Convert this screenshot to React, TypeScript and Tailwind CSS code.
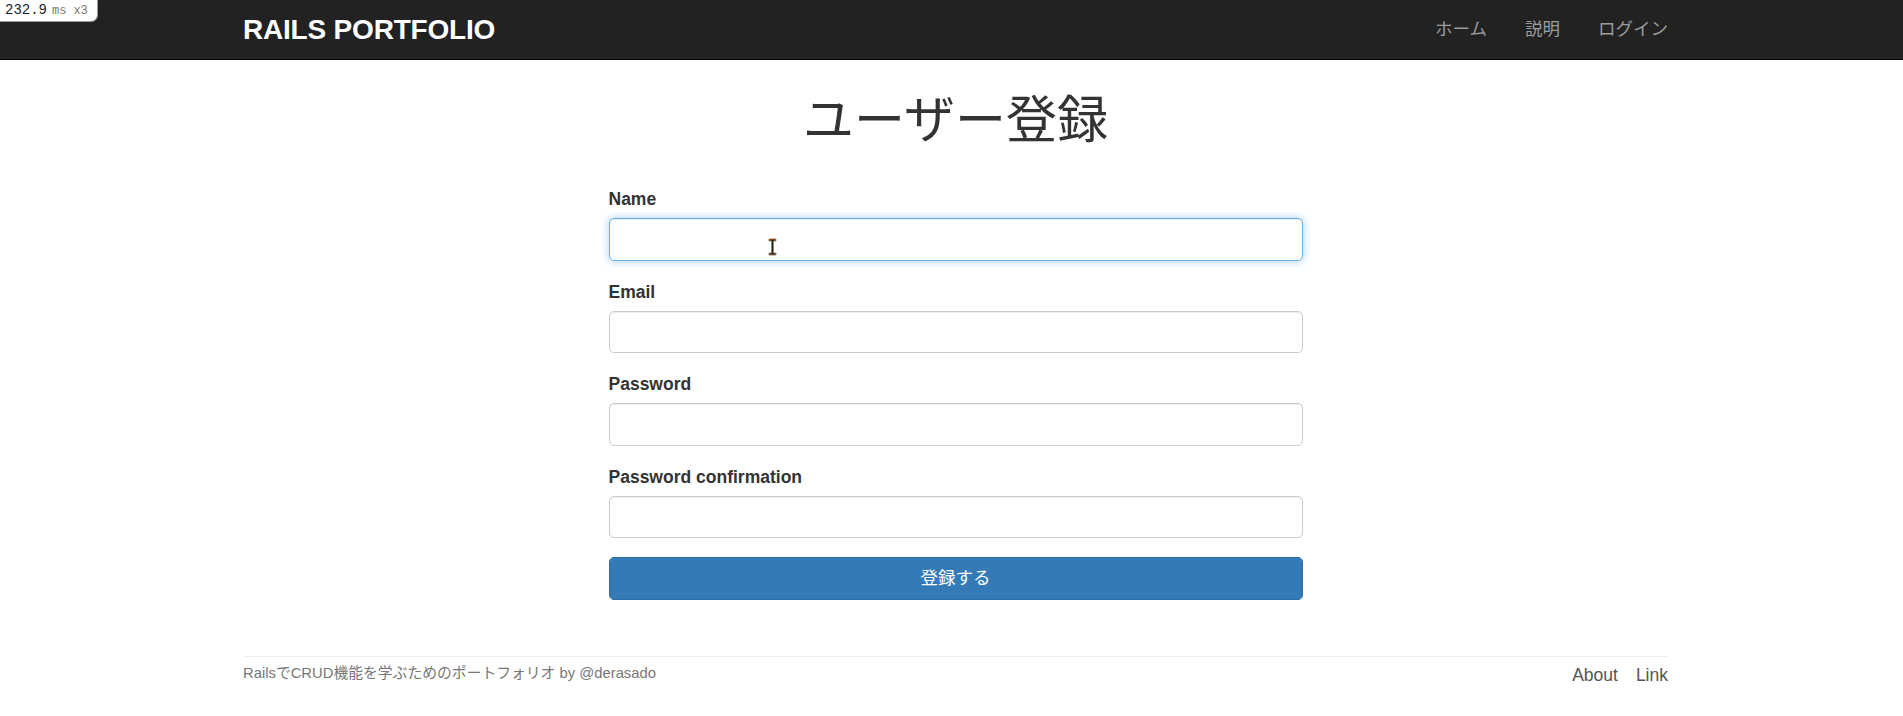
import React from 'react';

const JP = '"Liberation Sans", "Noto Sans CJK JP", sans-serif';

const fields = [
  { id: 'name', label: 'Name', type: 'text', focused: true },
  { id: 'email', label: 'Email', type: 'email' },
  { id: 'password', label: 'Password', type: 'password' },
  { id: 'password_confirmation', label: 'Password confirmation', type: 'password' },
];

const IBeam: React.FC<{ className?: string }> = ({ className }) => (
  <svg width="9" height="18" viewBox="0 0 9 18" className={className}>
    <path
      d="M1 1h7v2H5.5v12H8v2H1v-2h2.5V3H1z"
      fill="#1a1a1a"
      stroke="#c47a3c"
      strokeWidth="1"
    />
  </svg>
);

const App: React.FC = () => {
  return (
    <div className="min-h-screen bg-white text-[#333]" style={{ fontFamily: JP }}>
      {/* timing overlay */}
      <div className="absolute top-0 left-0 z-50 flex items-baseline gap-[5px] h-[22px] pl-[5px] pr-[9px] bg-white border-r border-b border-[#9a9a9a] rounded-br-[7px] font-['Liberation_Mono',monospace]">
        <span className="text-[14px] text-[#222] leading-[21px]">232.9</span>
        <span className="text-[12px] text-[#777] leading-[21px]">ms</span>
        <span className="text-[12px] text-[#777] leading-[21px] ml-[2px]">x3</span>
      </div>

      <nav className="h-[60px] bg-[#222] border-b border-[#080808]">
        <div className="pl-[8px] h-full">
          <div className="w-[1425px] mx-auto h-full flex items-center justify-between">
            <a className="text-white font-bold text-[28px] tracking-[-0.2px] leading-none" href="#">
              RAILS PORTFOLIO
            </a>
            <ul className="flex items-center h-full text-[17.5px] text-[#9d9d9d]">
              <li className="px-[19px]">ホーム</li>
              <li className="px-[19px]">説明</li>
              <li className="pl-[19px]">ログイン</li>
            </ul>
          </div>
        </div>
      </nav>

      <div className="pl-[8px]">
        <div className="w-[1425px] mx-auto">
          <h1 className="mt-[33px] h-[55px] leading-[55px] text-center text-[51px] font-normal text-[#333]">
            ユーザー登録
          </h1>

          <form className="w-[694px] mx-auto mt-[39px]">
            {fields.map((f) => (
              <div key={f.id} className="mb-[18.75px]">
                <label
                  htmlFor={f.id}
                  className="block mb-[6.25px] leading-[25px] text-[17.5px] font-bold text-[#333]"
                >
                  {f.label}
                </label>
                <div className="relative">
                  <input
                    id={f.id}
                    type={f.type}
                    className={
                      f.focused
                        ? 'block w-full h-[42.5px] px-[15px] rounded-[5px] border border-[#66afe9] bg-white outline-none shadow-[inset_0_1px_1px_rgba(0,0,0,0.075),0_0_8px_rgba(102,175,233,0.6)]'
                        : 'block w-full h-[42.5px] px-[15px] rounded-[5px] border border-[#ccc] bg-white outline-none shadow-[inset_0_1px_1px_rgba(0,0,0,0.075)]'
                    }
                  />
                  {f.focused && <IBeam className="absolute left-[159px] top-[20px] pointer-events-none" />}
                </div>
              </div>
            ))}
            <button
              type="button"
              className="block w-full h-[42.5px] rounded-[5px] bg-[#337ab7] border border-[#2e6da4] text-white text-[17.5px]"
            >
              登録する
            </button>
          </form>

          <footer className="mt-[56px] border-t border-[#eee] pt-[4px] flex justify-between items-start">
            <p className="text-[14.8px] leading-[25px] text-[#777]">
              RailsでCRUD機能を学ぶためのポートフォリオ by @derasado
            </p>
            <ul className="flex gap-[18px] text-[17.5px] leading-[28px] text-[#555]">
              <li>About</li>
              <li>Link</li>
            </ul>
          </footer>
        </div>
      </div>
    </div>
  );
};

export default App;
